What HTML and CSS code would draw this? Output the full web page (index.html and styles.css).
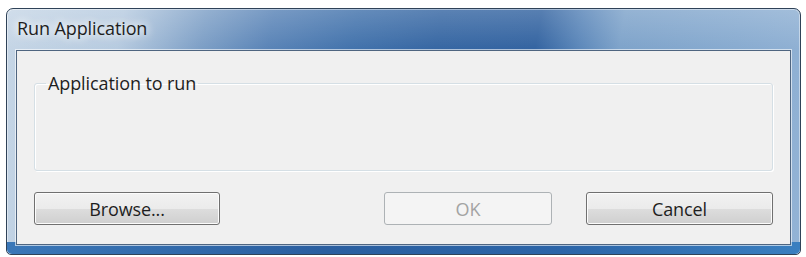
FILE: index.html
```html
<!DOCTYPE html>
<html>
<head>
<meta charset="utf-8">
<link rel="stylesheet" href="styles.css">
</head>
<body>
<div class="window">
  <div class="titlebar"><span class="title">Run Application</span></div>
  <div class="client">
    <fieldset class="group">
      <legend class="group-label">Application to run</legend>
    </fieldset>
    <div class="buttons">
      <button class="btn btn-browse">Browse...</button>
      <div class="spacer"></div>
      <button class="btn btn-ok" disabled>OK</button>
      <button class="btn btn-cancel">Cancel</button>
    </div>
  </div>
</div>
</body>
</html>
```
FILE: styles.css
```css
html, body {
  margin: 0;
  padding: 0;
  background: #ffffff;
}
body {
  font-family: "Open Sans", "Noto Sans", "Liberation Sans", sans-serif;
}
.window {
  margin: 8px 0 0 6px;
  width: 795px;
  height: 247px;
  box-sizing: border-box;
  border: 1px solid #2f4258;
  border-radius: 7px 7px 5px 5px;
  padding: 0 9px 9px 9px;
  display: flex;
  flex-direction: column;
  background:
    linear-gradient(to bottom, rgba(255,255,255,0.18) 0, rgba(255,255,255,0) 40px),
    linear-gradient(100deg, #c6d6e6 0%, #b7cbe0 14%, #7d9fc6 24%, #5a84b7 32%, #4373ac 42%, #3767a3 52%, #3464a1 64%, #5a86b9 69%, #7ea3ca 74%, #88abd0 88%, #93b3d5 100%);
  position: relative;
  box-shadow: inset 0 0 0 1px rgba(255,255,255,0.45);
}
.window::after {
  content: "";
  position: absolute;
  left: 0; right: 0; bottom: 0;
  height: 12px;
  border-radius: 0 0 5px 5px;
  background: linear-gradient(to right, #3a77b8, #2b5fa0 40%, #2c65a8 70%, #3a7fc0);
  z-index: 0;
}
.titlebar {
  height: 41px;
  display: flex;
  align-items: center;
  padding-left: 1px;
  flex: none;
}
.title {
  font-size: 18px;
  color: #1e1e1e;
  margin-top: -3px;
  letter-spacing: -0.1px;
  text-shadow: 0 0 8px #ffffff, 0 0 12px #ffffff;
}
.client {
  flex: 1;
  position: relative;
  z-index: 1;
  background: #f0f0f0;
  border: 1px solid #4f6580;
  box-shadow: 0 0 0 1px rgba(255,255,255,0.6);
  display: flex;
  flex-direction: column;
  padding: 0 17px 0 17px;
}
.group {
  margin: 20px 0 0 0;
  height: 100px;
  box-sizing: border-box;
  border: 1px solid #d5dfe5;
  border-radius: 3px;
  box-shadow: inset 1px 1px 0 #ffffff, 1px 1px 0 #ffffff;
  padding: 0;
}
.group-label {
  font-size: 18px;
  color: #1e1e1e;
  padding: 0 2px;
  margin-left: 11px;
  line-height: 24px;
  letter-spacing: -0.1px;
}
.buttons {
  display: flex;
  align-items: center;
  margin-top: 21px;
  gap: 34px;
}
.spacer {
  flex: 1;
}
.btn {
  height: 33px;
  box-sizing: border-box;
  font-family: "Open Sans", "Noto Sans", "Liberation Sans", sans-serif;
  font-size: 18px;
  letter-spacing: -0.1px;
  color: #1e1e1e;
  border: 1px solid #707070;
  border-radius: 3px;
  background: linear-gradient(to bottom, #f2f2f2 0%, #ebebeb 50%, #dddddd 51%, #cfcfcf 100%);
  box-shadow: inset 0 0 0 1px #fcfcfc;
  padding: 0;
}
.btn-browse {
  width: 186px;
}
.btn-ok {
  width: 168px;
  color: #a3a3a3;
  border-color: #adb2b5;
  background: #f4f4f4;
  box-shadow: none;
}
.btn-cancel {
  width: 187px;
}
```
